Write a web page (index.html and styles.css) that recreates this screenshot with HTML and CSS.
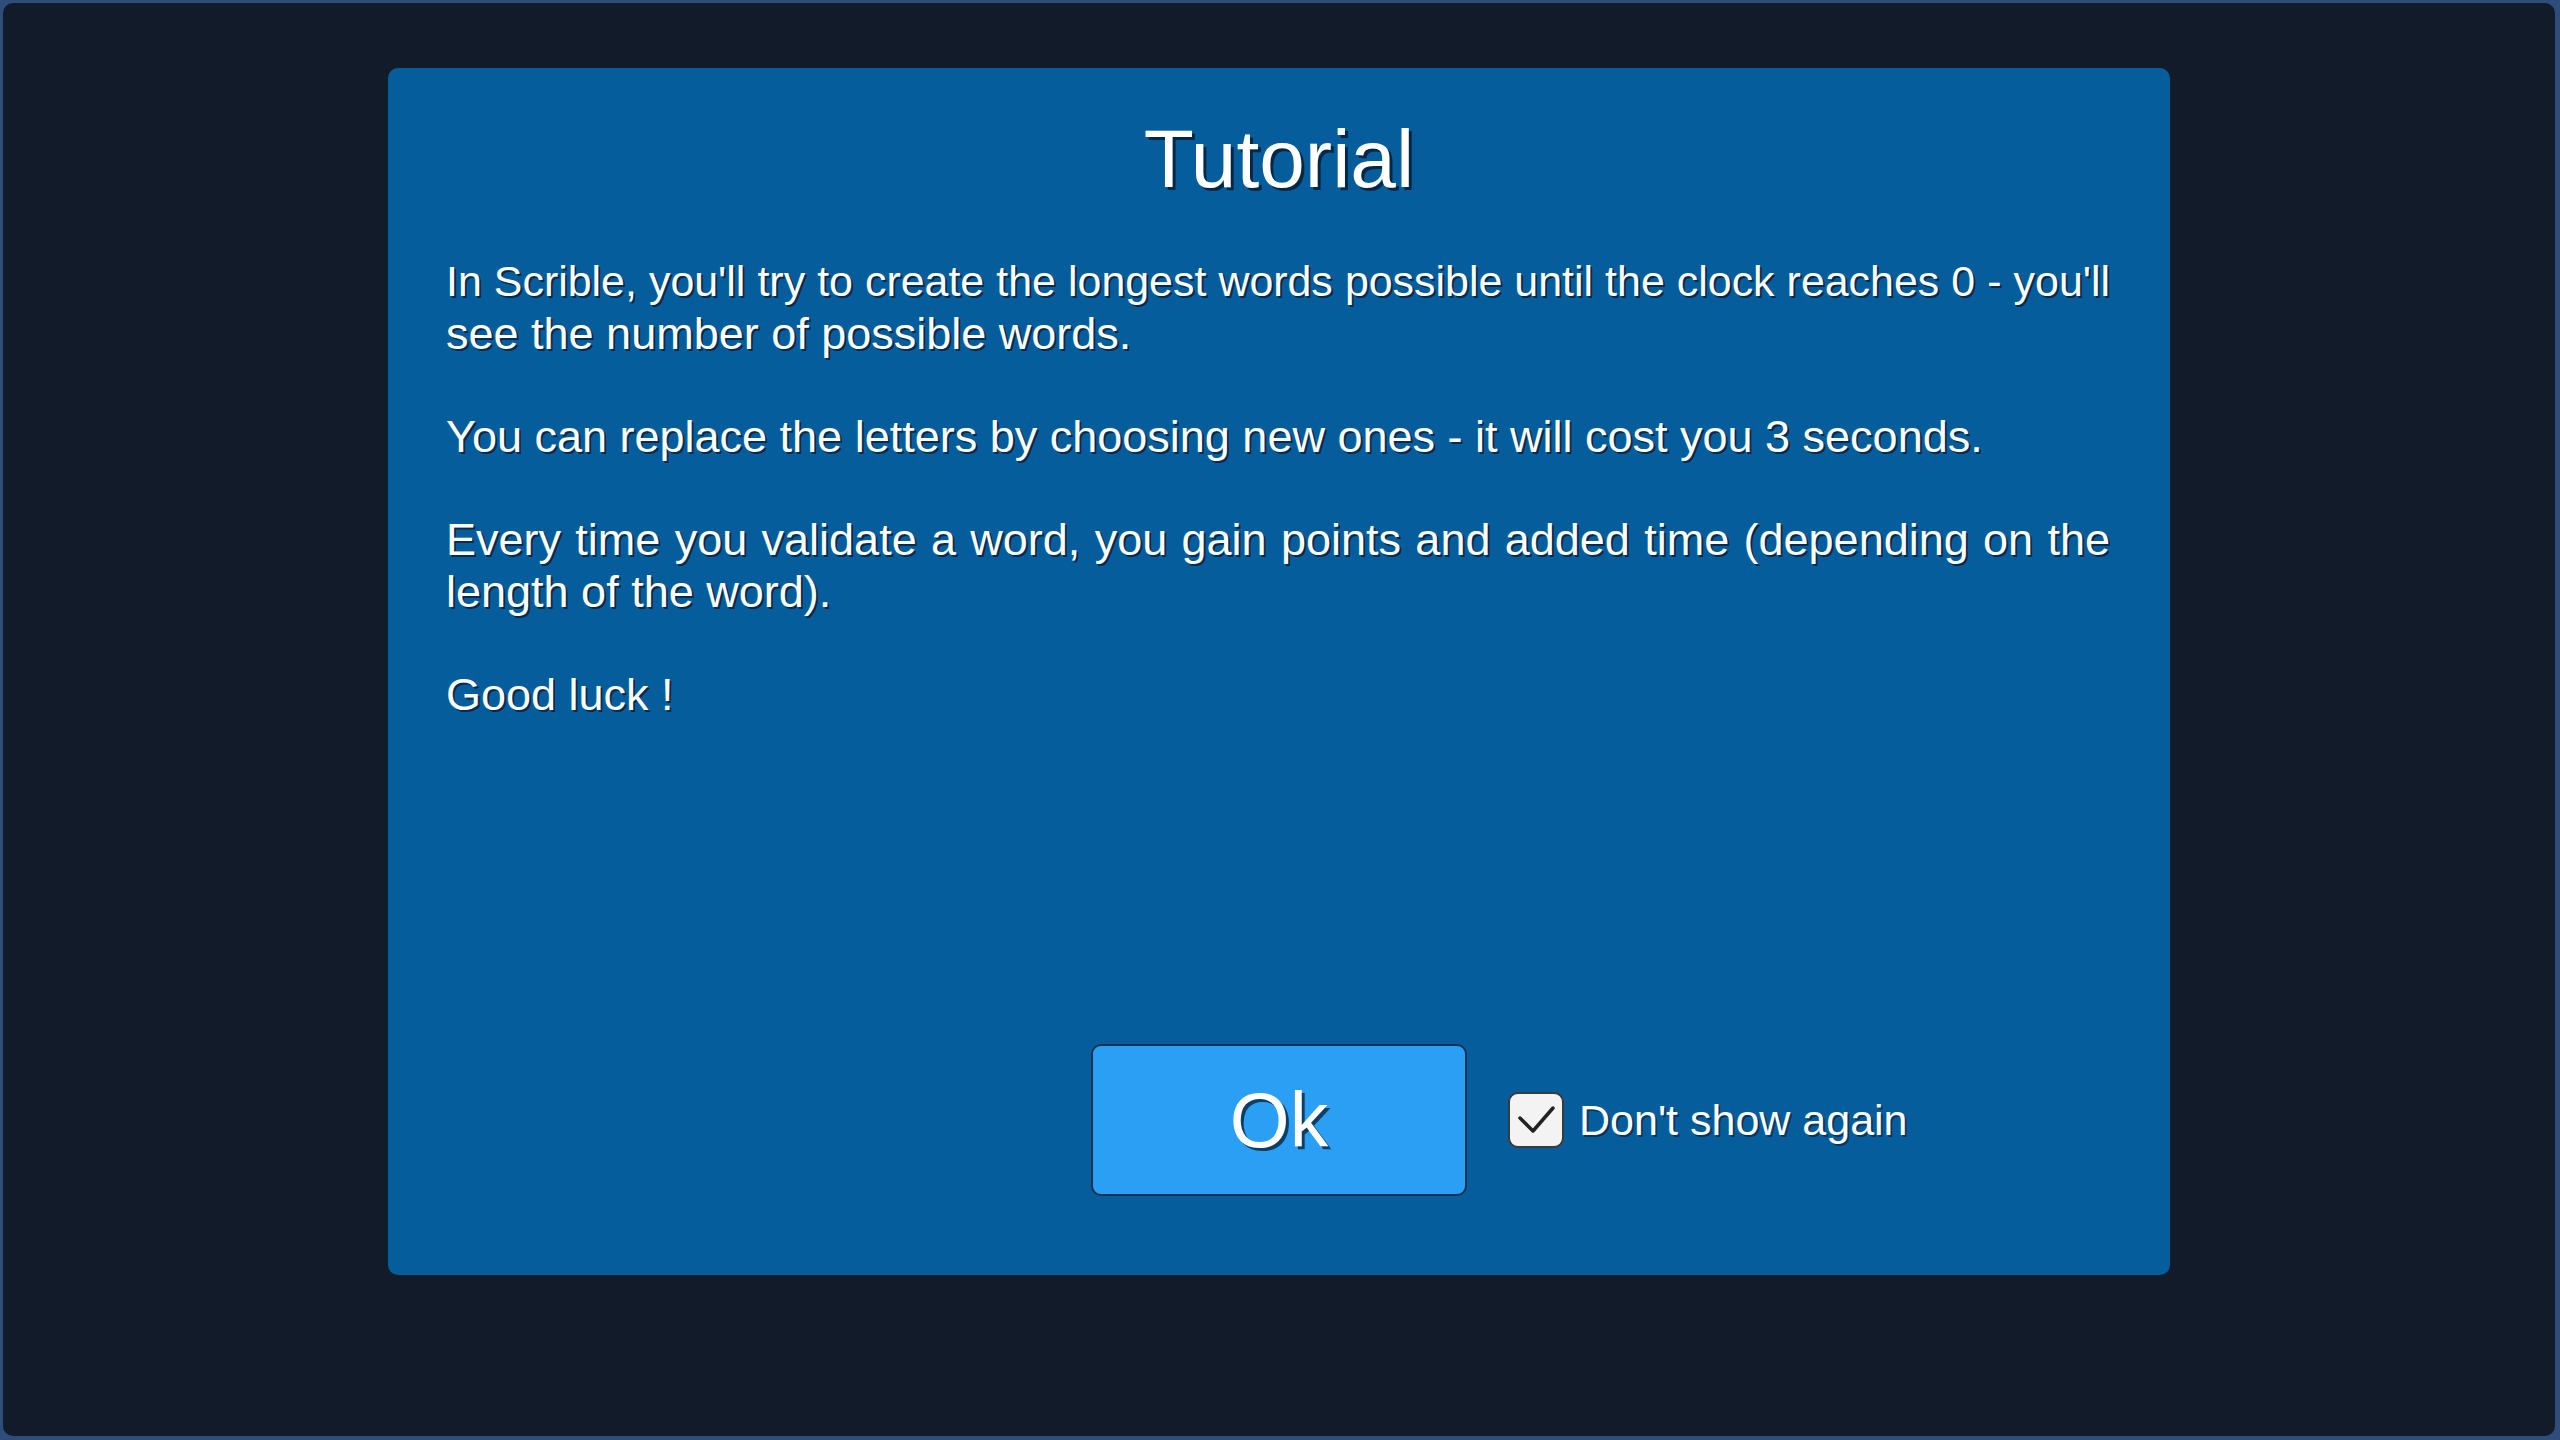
FILE: index.html
```html
<!DOCTYPE html>
<html lang="en">
<head>
    <meta charset="UTF-8">
    <meta name="viewport" content="width=device-width, initial-scale=1.0">
    <title>Scrible - Tutorial</title>
    <link rel="stylesheet" href="styles.css">
</head>
<body>
    <div id="screen">
        <div id="tutorial" class="panel">
            <h1 class="title">Tutorial</h1>
            <div class="text">
                <p>In Scrible, you'll try to create the longest words possible until the clock reaches 0 - you'll see the number of possible words.</p>
                <p>You can replace the letters by choosing new ones - it will cost you 3 seconds.</p>
                <p>Every time you validate a word, you gain points and added time (depending on the length of the word).</p>
                <p>Good luck !</p>
            </div>
            <div class="footer">
                <button class="button" id="ok-button">Ok</button>
                <label class="toggle">
                    <span class="checkbox">
                        <svg viewBox="0 0 56 56" width="56" height="56">
                            <path d="M12 26 L25 39 L45 16" fill="none" stroke="#222" stroke-width="3.5" stroke-linecap="round" stroke-linejoin="round"/>
                        </svg>
                    </span>
                    <span class="toggle-label">Don't show again</span>
                </label>
            </div>
        </div>
    </div>
</body>
</html>
```

FILE: styles.css
```css
body {
    margin: 0;
    background-color: #2f4d7a;
    font-family: "Liberation Sans", Arial, sans-serif;
    color: #ffffff;
}
#screen {
    margin: 3px 5px 4px 3px;
    height: 1433px;
    background-color: #121b2a;
    border-radius: 10px;
    padding-top: 65px;
    box-sizing: border-box;
}
.panel {
    width: 1782px;
    height: 1207px;
    margin: 0 auto;
    box-sizing: border-box;
    padding: 45px 58px 79px 58px;
    background-color: #065d9c;
    border-radius: 10px;
    display: flex;
    flex-direction: column;
}
.title {
    margin: 0;
    font-size: 82px;
    font-weight: normal;
    line-height: 92px;
    text-align: center;
    text-shadow: 3px 3px 0 rgba(4, 30, 55, 0.85);
}
.text {
    width: 1664px;
    margin-top: 51px;
    font-size: 45px;
    line-height: 51.6px;
    text-align: justify;
    text-shadow: 2px 2px 0 rgba(4, 30, 55, 0.8);
}
.text p {
    margin: 0 0 51.6px 0;
}
.text p:first-child::first-line {
    font-size: 42.9px;
}
.footer {
    margin-top: auto;
    display: grid;
    grid-template-columns: 1fr auto 1fr;
    align-items: center;
}
.button {
    grid-column: 2;
    width: 376px;
    height: 152px;
    box-sizing: border-box;
    border: 2px solid #0c3253;
    border-radius: 10px;
    background-color: #2b9ff4;
    color: #ffffff;
    font-family: "Liberation Sans", Arial, sans-serif;
    font-size: 77px;
    padding: 0;
    text-shadow: 3px 3px 0 rgba(4, 30, 55, 0.75);
    cursor: pointer;
}
.toggle {
    grid-column: 3;
    display: flex;
    align-items: center;
    margin-left: 41px;
    cursor: pointer;
}
.checkbox {
    width: 56px;
    height: 56px;
    box-sizing: border-box;
    border: 2px solid #3a3a3a;
    border-radius: 10px;
    background-color: #f3f3f3;
    display: flex;
    align-items: center;
    justify-content: center;
    overflow: hidden;
}
.checkbox svg {
    flex: none;
}
.toggle-label {
    margin-left: 15px;
    font-size: 43px;
    text-shadow: 2px 2px 0 rgba(4, 30, 55, 0.6);
}
```
